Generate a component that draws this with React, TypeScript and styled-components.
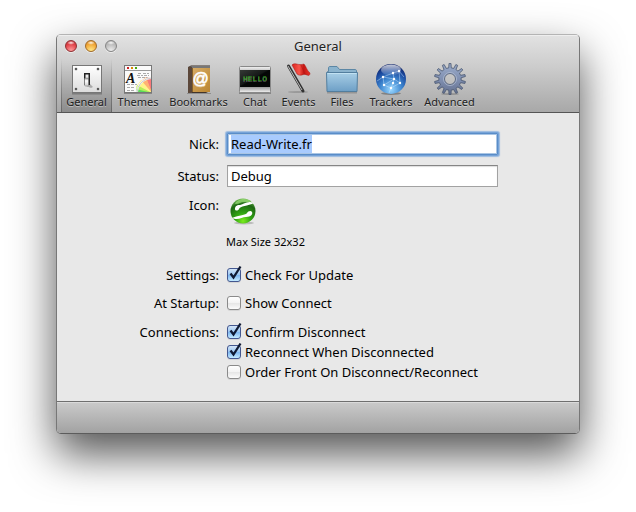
import React, { useEffect, useRef, useState } from "react";
import styled, { createGlobalStyle } from "styled-components";

const GlobalStyle = createGlobalStyle`
  *, *::before, *::after { box-sizing: border-box; }
  body {
    margin: 0;
    background: #fff;
    color: #000;
    font-family: "Lucida Grande", "Noto Sans", "Open Sans", sans-serif;
    font-size: 13px;
    line-height: 20px;
  }
  button, input { font: inherit; color: inherit; }
`;

const Desktop = styled.div`
  min-height: 100vh;
  padding: 34px 56px 78px;
`;

const Window = styled.main`
  border: 1px solid #777;
  border-top-color: #b4b4b4;
  border-bottom-color: #5c5c5c;
  border-radius: 5px;
  overflow: hidden;
  background: #e8e8e8;
  box-shadow: 0 20px 44px rgba(0, 0, 0, 0.68);
`;

const Header = styled.header`
  border-bottom: 1px solid #555;
  background: linear-gradient(#e2e2e2, #cdcdcd 40%, #a8a8a8);
  box-shadow: inset 0 1px #eee;
`;

const TitleBar = styled.div`
  display: grid;
  grid-template-columns: 1fr auto 1fr;
  align-items: center;
  height: 24px;
  padding: 0 8px 2px;
`;

const Lights = styled.div`
  display: flex;
  gap: 8px;
`;

const Light = styled.button<{ $rim: string; $top: string; $mid: string; $low: string }>`
  width: 12px;
  height: 12px;
  padding: 0;
  border: 1px solid ${(p) => p.$rim};
  border-radius: 50%;
  background:
    radial-gradient(ellipse 4px 2px at 50% 18%, rgba(255, 255, 255, 0.9), transparent),
    radial-gradient(circle at 50% 95%, ${(p) => p.$low}, ${(p) => p.$mid} 60%, ${(p) => p.$top});
  box-shadow: 0 1px rgba(255, 255, 255, 0.5);
`;

const Title = styled.h1`
  margin: 0;
  font-size: 13px;
  font-weight: 400;
  line-height: 22px;
  color: #222;
  text-shadow: 0 1px rgba(255, 255, 255, 0.5);
`;

const Toolbar = styled.nav`
  display: flex;
  padding-left: 4px;
`;

const Tab = styled.button<{ $width: number; $active: boolean }>`
  display: flex;
  flex-direction: column;
  align-items: center;
  width: ${(p) => p.$width}px;
  height: 53px;
  padding: 4px 0 0;
  border: 0;
  border-left: 1px solid transparent;
  border-right: 1px solid transparent;
  border-image: ${(p) => (p.$active ? "linear-gradient(rgba(90,90,90,0), rgba(90,90,90,.75)) 1" : "none")};
  background: ${(p) => (p.$active ? "linear-gradient(rgba(0,0,0,0), rgba(0,0,0,.17))" : "none")};
  font-size: 11px;
  line-height: 14px;
  color: #222;
  text-shadow: 0 1px rgba(255, 255, 255, 0.4);
  white-space: nowrap;

  svg { display: block; flex: none; }
`;

const Form = styled.form`
  padding: 20px 81px 19px 0;
`;

const Row = styled.div<{ $gap?: number; $center?: boolean }>`
  display: grid;
  grid-template-columns: 162px minmax(0, 1fr);
  column-gap: 8px;
  align-items: ${(p) => (p.$center ? "center" : "start")};
  margin-top: ${(p) => p.$gap ?? 0}px;
`;

const Label = styled.label`
  text-align: right;
  line-height: 20px;
`;

const TextField = styled.input`
  width: 100%;
  height: 22px;
  padding: 0 4px 0 3px;
  border: 1px solid #a2a2a2;
  border-top-color: #858585;
  border-radius: 0;
  background: #fff;
  box-shadow: inset 0 1px 1px #ddd;
  outline: 0;

  &:focus {
    border-color: #5a8dc8;
    border-radius: 1px;
    box-shadow: 0 0 0 1px #76a3d8, 0 0 1px 2px #9bbbe0, inset 0 0 0 1px #a9c5e4;
  }

  &::selection { background: #a8cbfe; color: #000; }
`;

const Choices = styled.div`
  display: flex;
  flex-direction: column;
`;

const Choice = styled.label`
  display: flex;
  align-items: center;
  gap: 4px;
  height: 20px;
  white-space: nowrap;
`;

const CheckHolder = styled.span`
  display: grid;
  width: 14px;
  height: 14px;

  > * { grid-area: 1 / 1; }
  svg { overflow: visible; pointer-events: none; }
`;

const CheckInput = styled.input`
  appearance: none;
  width: 14px;
  height: 14px;
  margin: 0;
  border: 1px solid #8a8a8a;
  border-radius: 3px;
  background: linear-gradient(#fff, #f3f3f3 48%, #e6e6e6 52%, #fbfbfb);
  box-shadow: 0 1px rgba(0, 0, 0, 0.08);

  &:checked {
    border-color: #43578f;
    background: linear-gradient(#d3e5f8, #9cc7f2 48%, #7db6f0 52%, #c4eaff);
  }
`;

const Picture = styled.button`
  display: block;
  width: 32px;
  height: 32px;
  padding: 0;
  border: 0;
  background: none;
`;

const Hint = styled.p`
  margin: 7px 0 0 -1px;
  font-size: 11px;
  line-height: 16px;
`;

const Footer = styled.footer`
  height: 32px;
  border-top: 1px solid #6f6f6f;
  background: linear-gradient(#cacaca, #a2a2a2);
  box-shadow: inset 0 1px #dadada;
`;

const Icon = ({ children }: { children: React.ReactNode }) => (
  <svg width="32" height="32" viewBox="0 0 32 32" aria-hidden="true">{children}</svg>
);

const GeneralIcon = () => (
  <Icon>
    <defs>
      <linearGradient id="plate" x2="0" y2="1"><stop stopColor="#fff" /><stop offset="1" stopColor="#dcdcdc" /></linearGradient>
      <linearGradient id="lever" x2="0" y2="1"><stop stopColor="#999" /><stop offset=".35" stopColor="#fff" /><stop offset="1" stopColor="#ccc" /></linearGradient>
    </defs>
    <rect x="1" y="3" width="30" height="28.500" fill="#555" opacity=".5" />
    <rect x="1.500" y="2.500" width="29" height="27" fill="url(#plate)" stroke="#777" />
    {[[5, 6], [27, 6], [5, 26], [27, 26]].map(([x, y]) => (
      <g key={`${x}-${y}`}><circle cx={x} cy={y} r="1.500" fill="#aaa" /><circle cx={x} cy={y} r=".9" fill="#333" /></g>
    ))}
    <path d="M18 20 L22 24 L20 25 L15 23Z" fill="#aaa" />
    <rect x="13" y="10" width="6" height="12" fill="#222" />
    <rect x="14.500" y="11.500" width="3" height="4" fill="#eee" />
    <rect x="13.500" y="15" width="4" height="8" rx="1" fill="url(#lever)" stroke="#777" strokeWidth=".5" />
  </Icon>
);

const ThemesIcon = () => (
  <Icon>
    <defs>
      <clipPath id="page"><rect x="3" y="8" width="26" height="21" /></clipPath>
    </defs>
    <rect x="2" y="3" width="28" height="28" fill="#555" opacity=".5" />
    <rect x="2.500" y="2.500" width="27" height="27" fill="#fafafa" stroke="#777" />
    <path d="M3 7.500H29" stroke="#999" />
    <rect x="5" y="4" width="2" height="2" fill="#c22" /><rect x="9" y="4" width="2" height="2" fill="#d80" /><rect x="13" y="4" width="2" height="2" fill="#4a1" />
    <path d="M16 10.500h4m1 0h6M15 12.500h6m1 0h5M16 14.500h10M5 21.500h10M5 24.500h8M5 27.500h8" stroke="#aaa" strokeDasharray="3 1" />
    <text x="4" y="20" fontFamily="Liberation Serif, serif" fontSize="14" fontWeight="700" fontStyle="italic" fill="#111">A</text>
    <g clipPath="url(#page)">
      <circle cx="30" cy="30" r="15" fill="#c4ef62" />
      <path d="M30 30V14L24 15Z" fill="#f9787a" />
      <path d="M30 30L24 14L18 19Z" fill="#ffb274" />
      <path d="M30 30L19 17L14 24Z" fill="#fff38a" />
      <path d="M30 30L15 22L14 27Z" fill="#b4ee5a" />
      <path d="M30 30L14 26V30Z" fill="#5bdc5a" />
      <circle cx="30" cy="30" r="15" fill="none" stroke="#fafafa" strokeWidth="2" />
      <circle cx="30" cy="30" r="15" fill="none" stroke="#aaa" strokeWidth=".6" />
    </g>
  </Icon>
);

const BookIcon = () => (
  <Icon>
    <defs><linearGradient id="cover" x2="1" y2="1"><stop stopColor="#d9ad66" /><stop offset="1" stopColor="#b98531" /></linearGradient></defs>
    <path d="M4 30H28V31H4Z" fill="#333" opacity=".3" />
    <path d="M5 4L8 2.500H27V28L23 30H5Z" fill="#42352b" />
    <path d="M6 4L9 3H27V5H6Z" fill="#777" />
    <path d="M5 4H9V30H5Z" fill="#5b473a" />
    <rect x="9" y="5" width="18" height="24" fill="url(#cover)" />
    <path d="M9.500 5V29" stroke="#856029" />
    <text x="17.500" y="21" textAnchor="middle" fontFamily="Liberation Sans, sans-serif" fontSize="16" fill="#fff" stroke="#fff" strokeWidth=".5">@</text>
  </Icon>
);

const ChatIcon = () => (
  <Icon>
    <defs>
      <linearGradient id="bezel" x2="0" y2="1"><stop stopColor="#f4f4f4" /><stop offset=".2" stopColor="#b9b9b9" /><stop offset=".8" stopColor="#a0a0a0" /><stop offset="1" stopColor="#f3f3f3" /></linearGradient>
      <linearGradient id="screen" x2="1" y2="1"><stop stopColor="#353a36" /><stop offset=".45" stopColor="#151817" /><stop offset=".5" stopColor="#050706" /></linearGradient>
    </defs>
    <rect x="0" y="29" width="32" height="2" fill="#555" opacity=".5" />
    <rect x=".5" y="3.500" width="31" height="26" rx="1" fill="url(#bezel)" stroke="#888" />
    <rect x="1" y="7" width="30" height="17" fill="url(#screen)" />
    <text x="16" y="18" textAnchor="middle" fontFamily="Liberation Mono, monospace" fontSize="8" fill="#36a820">HELLO</text>
  </Icon>
);

const FlagIcon = () => (
  <Icon>
    <defs><linearGradient id="flag"><stop stopColor="#d92520" /><stop offset=".4" stopColor="#f9554a" /><stop offset=".65" stopColor="#c51613" /><stop offset="1" stopColor="#e8332a" /></linearGradient></defs>
    <ellipse cx="15" cy="29" rx="10" ry="1" fill="#555" opacity=".3" />
    <path d="M5.500 3L20 28" stroke="#333" strokeWidth="3" strokeLinecap="round" />
    <path d="M5 3L19 27" stroke="#bbb" strokeWidth="1" />
    <path d="M9 2C12-1 15 3 21 1C23 3 24 8 27 10C27 12 26 13 24 12C20 10 18 14 14 11Z" fill="url(#flag)" stroke="#a61816" strokeWidth=".5" />
    <path d="M18 2L22 11" stroke="#a91816" strokeWidth="1" opacity=".5" />
  </Icon>
);

const FolderIcon = () => (
  <Icon>
    <defs><linearGradient id="folder" x2="0" y2="1"><stop stopColor="#a9cfe6" /><stop offset="1" stopColor="#6d9fc6" /></linearGradient></defs>
    <path d="M1 29.500H31" stroke="#555" strokeWidth="2" opacity=".35" />
    <path d="M1.500 28V8.500H2.500V5C2.500 4 3 3.500 4 3.500H11L13.500 6.500H29C30 6.500 30.500 7 30.500 8V28Z" fill="#8bb3cd" stroke="#5c87a5" />
    <path d="M.5 9.500H31.500L31 28.500H1Z" fill="url(#folder)" stroke="#537e9e" />
    <path d="M1.500 10.500H30.500" stroke="#c1e1f2" />
  </Icon>
);

const nodes = [[8, 14], [18, 10], [24, 8], [19, 16], [9, 22], [16, 25], [25, 20], [18, 20]];
const TrackersIcon = () => (
  <Icon>
    <defs>
      <radialGradient id="globe" cx=".5" cy=".85" r=".8"><stop stopColor="#9ad8ff" /><stop offset=".45" stopColor="#3f87d0" /><stop offset=".8" stopColor="#19479d" /><stop offset="1" stopColor="#14296c" /></radialGradient>
      <linearGradient id="gloss" x2="0" y2="1"><stop stopColor="#fff" stopOpacity=".75" /><stop offset="1" stopColor="#fff" stopOpacity=".05" /></linearGradient>
    </defs>
    <ellipse cx="16" cy="30.500" rx="10" ry="1.500" fill="#333" opacity=".4" />
    <circle cx="16" cy="16" r="15" fill="url(#globe)" />
    <ellipse cx="16" cy="7" rx="10" ry="5.500" fill="url(#gloss)" />
    <path d="M2 18L8 14L18 10L24 8M8 14L9 22L16 25L25 20L24 8M18 10L19 16L8 14M19 16L25 20M9 22L19 16L18 20L16 25L14 30M24 8L29 14" fill="none" stroke="#cfe9ff" strokeWidth=".6" opacity=".75" />
    {nodes.map(([x, y]) => <circle key={`${x}-${y}`} cx={x} cy={y} r="1.200" fill="#fff" />)}
  </Icon>
);

const TEETH = 14;
const gearPath = Array.from({ length: TEETH }, (_, i) => {
  const step = (Math.PI * 2) / TEETH;
  const at = (offset: number, r: number) => {
    const a = i * step - Math.PI / 2 + offset * step;
    return `${(16 + r * Math.cos(a)).toFixed(2)} ${(16 + r * Math.sin(a)).toFixed(2)}`;
  };
  return `${i ? "L" : "M"}${at(-0.25, 11.2)}L${at(-0.14, 15.6)}L${at(0.14, 15.6)}L${at(0.25, 11.2)}`;
}).join("") + "ZM16 10.500A5.500 5.500 0 1 0 16 21.500A5.500 5.500 0 1 0 16 10.500Z";

const GearIcon = () => (
  <Icon>
    <defs><linearGradient id="gear" x2="0" y2="1"><stop stopColor="#9dadca" /><stop offset=".5" stopColor="#8090b2" /><stop offset="1" stopColor="#65718f" /></linearGradient></defs>
    <ellipse cx="16" cy="31" rx="9" ry="1" fill="#444" opacity=".3" />
    <path d={gearPath} fill="url(#gear)" fillRule="evenodd" stroke="#48556f" strokeWidth=".8" />
    <circle cx="16" cy="16" r="6.500" fill="none" stroke="#b0bbd0" strokeWidth=".8" />
  </Icon>
);

const AvatarIcon = () => (
  <Icon>
    <defs><radialGradient id="avatar" cx=".5" cy=".9" r=".9"><stop stopColor="#7bec1d" /><stop offset=".35" stopColor="#32a613" /><stop offset=".75" stopColor="#1d6813" /><stop offset="1" stopColor="#72ba55" /></radialGradient></defs>
    <ellipse cx="17" cy="28" rx="10" ry="1.500" fill="#333" opacity=".25" />
    <circle cx="16" cy="16" r="12.500" fill="url(#avatar)" />
    <path d="M8 9C10 4 20 2 24 7L17 7C14 7 12 9 9 9Z" fill="#9cdf79" opacity=".7" />
    <path d="M27 8C21 5 17 9 13 10C9 10 8 12 8 14C8 16 11 16 12 14C13 11 21 11 27 8Z" fill="#fff" />
    <path d="M5 23C11 26 15 22 19 22C24 22 26 19 25 17C24 15 21 16 20 18C19 20 12 20 5 23Z" fill="#fff" />
  </Icon>
);

const tabs = [
  { name: "General", width: 51, Glyph: GeneralIcon },
  { name: "Themes", width: 52, Glyph: ThemesIcon },
  { name: "Bookmarks", width: 69, Glyph: BookIcon },
  { name: "Chat", width: 44, Glyph: ChatIcon },
  { name: "Events", width: 43, Glyph: FlagIcon },
  { name: "Files", width: 44, Glyph: FolderIcon },
  { name: "Trackers", width: 54, Glyph: TrackersIcon },
  { name: "Advanced", width: 63, Glyph: GearIcon },
];

function Checkbox({ label, initial = false }: { label: string; initial?: boolean }) {
  const [checked, setChecked] = useState(initial);
  return (
    <Choice>
      <CheckHolder>
        <CheckInput type="checkbox" checked={checked} onChange={(e) => setChecked(e.target.checked)} />
        {checked && (
          <svg width="14" height="14" viewBox="0 0 14 14" aria-hidden="true">
            <path d="M3.500 5.500L6.500 9.500L13.500-1.500" fill="none" stroke="#101a33" strokeWidth="2.300" />
          </svg>
        )}
      </CheckHolder>
      {label}
    </Choice>
  );
}

export default function App() {
  const nick = useRef<HTMLInputElement>(null);
  const [active, setActive] = useState("General");

  useEffect(() => {
    nick.current?.focus();
    nick.current?.select();
  }, []);

  return (
    <>
      <GlobalStyle />
      <Desktop>
        <Window>
          <Header>
            <TitleBar>
              <Lights>
                <Light type="button" aria-label="Close" $rim="#8e2f32" $top="#b8262b" $mid="#e2444a" $low="#ff9d9d" />
                <Light type="button" aria-label="Minimize" $rim="#a06a28" $top="#d08220" $mid="#f2a838" $low="#ffe98a" />
                <Light type="button" aria-label="Zoom" $rim="#858585" $top="#a5a5a5" $mid="#bcbcbc" $low="#ededed" />
              </Lights>
              <Title>General</Title>
            </TitleBar>
            <Toolbar>
              {tabs.map(({ name, width, Glyph }) => (
                <Tab key={name} type="button" $width={width} $active={name === active} onClick={() => setActive(name)}>
                  <Glyph />
                  {name}
                </Tab>
              ))}
            </Toolbar>
          </Header>
          <Form onSubmit={(e) => e.preventDefault()}>
            <Row $center>
              <Label htmlFor="nick">Nick:</Label>
              <TextField id="nick" ref={nick} defaultValue="Read-Write.fr" spellCheck={false} />
            </Row>
            <Row $gap={10} $center>
              <Label htmlFor="status">Status:</Label>
              <TextField id="status" defaultValue="Debug" spellCheck={false} />
            </Row>
            <Row $gap={8}>
              <Label htmlFor="icon">Icon:</Label>
              <div>
                <Picture id="icon" type="button"><AvatarIcon /></Picture>
                <Hint>Max Size 32x32</Hint>
              </div>
            </Row>
            <Row $gap={15} role="group" aria-labelledby="settings">
              <Label as="span" id="settings">Settings:</Label>
              <Choices><Checkbox label="Check For Update" initial /></Choices>
            </Row>
            <Row $gap={8} role="group" aria-labelledby="startup">
              <Label as="span" id="startup">At Startup:</Label>
              <Choices><Checkbox label="Show Connect" /></Choices>
            </Row>
            <Row $gap={9} role="group" aria-labelledby="connections">
              <Label as="span" id="connections">Connections:</Label>
              <Choices>
                <Checkbox label="Confirm Disconnect" initial />
                <Checkbox label="Reconnect When Disconnected" initial />
                <Checkbox label="Order Front On Disconnect/Reconnect" />
              </Choices>
            </Row>
          </Form>
          <Footer />
        </Window>
      </Desktop>
    </>
  );
}
